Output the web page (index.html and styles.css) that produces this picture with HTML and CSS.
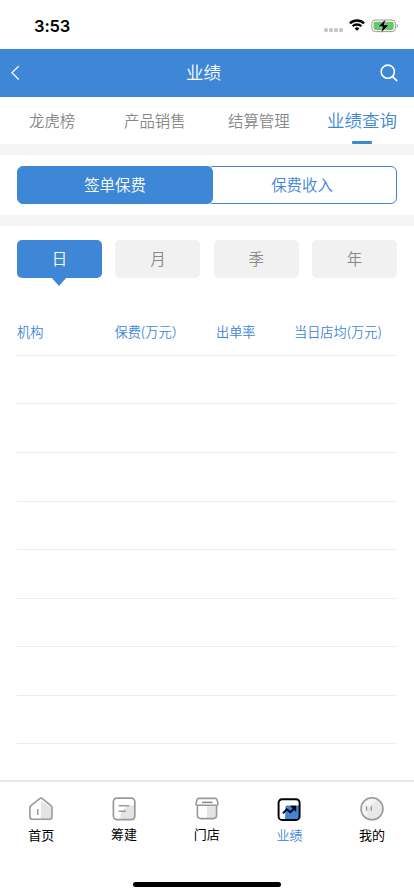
FILE: index.html
```html
<!DOCTYPE html>
<html lang="zh-CN">
<head>
<meta charset="utf-8">
<meta name="viewport" content="width=device-width, initial-scale=1">
<title>业绩</title>
<link rel="stylesheet" href="styles.css">
</head>
<body>
<div class="app">
  <div class="status">
    <span class="time">3:53</span>
    <div class="signals">
      <div class="dots"><i></i><i></i><i></i><i></i></div>
      <svg class="wifi" width="16" height="12" viewBox="0 0 16 12" fill="none" stroke="#000" stroke-width="2.3"><path d="M.9 4.4a10.1 10.1 0 0 1 14.2 0M3.6 7.3a6.3 6.3 0 0 1 8.800 0"/><path d="M8 11.800 5.600 9.400a3.500 3.500 0 0 1 4.800 0z" fill="#000" stroke="none"/></svg>
      <svg width="28" height="14" viewBox="0 0 28 14"><rect x=".8" y="1" width="23.600" height="11.600" rx="3.400" fill="#fff" stroke="#999"/><rect x="2.500" y="2.700" width="20.200" height="8.200" rx="1.800" fill="#63c966"/><path d="M25.700 5v4c1.500-.5 1.500-3.500 0-4z" fill="#999"/><path d="M14.800 0 6.800 7.800h4.700L9.800 13.900 18.200 5.800H13.300z" fill="#000" stroke="#fff" stroke-width=".5"/></svg>
    </div>
  </div>
  <header class="nav">
    <svg width="10" height="16" viewBox="0 0 10 16" fill="none" stroke="#fff" stroke-width="1.200"><path d="M8.700 1.200 1.900 7.800l6.800 6.700"/></svg>
    <h1>业绩</h1>
    <svg width="18" height="18" viewBox="0 0 18 18" fill="none" stroke="#fff" stroke-width="1.600" stroke-linecap="round"><circle cx="7.800" cy="7.700" r="6.600"/><path d="m12.600 12.600 4.100 4"/></svg>
  </header>
  <nav class="tabs">
    <span>龙虎榜</span><span>产品销售</span><span>结算管理</span><span class="current">业绩查询</span>
  </nav>
  <section class="segment">
    <button class="seg on">签单保费</button><button class="seg">保费收入</button>
  </section>
  <main>
    <div class="periods">
      <button class="on">日</button><button>月</button><button>季</button><button>年</button>
    </div>
    <div class="table">
      <div class="row head"><span>机构</span><span>保费(万元）</span><span>出单率</span><span>当日店均(万元)</span></div>
      <div class="row"></div><div class="row"></div><div class="row"></div><div class="row"></div>
      <div class="row"></div><div class="row"></div><div class="row"></div><div class="row"></div>
    </div>
  </main>
  <footer class="tabbar">
    <div class="item">
      <svg width="24" height="24" viewBox="0 0 24 24"><path d="M12 3.500 22.500 10v12H12c-1.500-7 2-10.500 8-12.500z" fill="#e4e4e4"/><path d="M12 4 20 10 12 22z" fill="#e4e4e4"/><path d="M10.700 1.600 1.900 8.600Q.9 9.400.9 10.700v9q0 2.600 2.600 2.600h16.900q2.600 0 2.600-2.600v-9q0-1.300-1-2.100l-8.700-7q-1.300-1-2.600 0z" fill="none" stroke="#999" stroke-width="1.600"/><path d="M8.700 12v6" stroke="#999" stroke-width="1.500"/></svg>
      <span>首页</span>
    </div>
    <div class="item raised">
      <svg width="24" height="24" viewBox="0 0 24 24"><path d="M22 8v14H8.500C7.500 14 13 8.500 22 8z" fill="#e4e4e4"/><rect x="1.400" y="1.200" width="21.400" height="21.400" rx="3.500" fill="none" stroke="#999" stroke-width="1.700"/><path d="M6.700 8.700h10.600M6.700 14.200h7.300" stroke="#999" stroke-width="1.600"/></svg>
      <span>筹建</span>
    </div>
    <div class="item raised">
      <svg width="24" height="24" viewBox="0 0 24 24"><path d="M12 8.500h9V18q0 3-3 3h-6z" fill="#e4e4e4"/><path d="M2.400 8.500v9.600q0 3.500 3.500 3.500h12.200q3.500 0 3.500-3.500V8.500" fill="none" stroke="#999" stroke-width="1.600"/><path d="M4 1.400h16q1.700 0 2.100 1.700l.8 3.200q.4 2-1.500 2H2.600q-1.900 0-1.500-2l.8-3.200Q2.300 1.400 4 1.400z" fill="#fff" stroke="#999" stroke-width="1.600"/><path d="M7 5.400h10.500" stroke="#888" stroke-width="1.500"/></svg>
      <span>门店</span>
    </div>
    <div class="item active">
      <svg width="24" height="24" viewBox="0 0 24 24"><path d="M8.500 8.500Q9 7.600 10 7.600h12V22H8z" fill="#3e86d6"/><rect x="1.600" y="1.200" width="21" height="20.800" rx="3.600" fill="none" stroke="#000" stroke-width="1.900"/><path d="m6 15.300 3.700-4 3.700 3 5-5.500" fill="none" stroke="#000" stroke-width="1.900"/><path d="M13 7.700h6.200v6.200z" fill="#000"/></svg>
      <span>业绩</span>
    </div>
    <div class="item">
      <svg width="24" height="24" viewBox="0 0 24 24"><circle cx="12" cy="11.800" r="11" fill="#e8e8e8"/><path d="M8 21C5 13 10 7 17 4 12-1 1 3 1.500 12c0 4 3 8 6.500 9z" fill="#f5f5f5"/><circle cx="12" cy="11.800" r="11" fill="none" stroke="#999" stroke-width="1.600"/><path d="M6.600 9.300v4.400M11.300 9.300v4.400" stroke="#999" stroke-width="1.400"/></svg>
      <span>我的</span>
    </div>
    <div class="home"></div>
  </footer>
</div>
</body>
</html>
```
FILE: styles.css
```css
* { box-sizing: border-box; }
body { margin: 0; background: #fff; font-family: "Noto Sans CJK SC", sans-serif; font-weight: 350; color: #000; }
button { border: 0; padding: 0; font: inherit; }
.app { width: 414px; height: 896px; display: flex; flex-direction: column; overflow: hidden; }
.status { height: 49px; flex: none; display: flex; justify-content: space-between; padding: 0 15px 0 34px; }
.time { font: 600 16.500px/52px Inter, sans-serif; letter-spacing: -.1px; }
.signals { display: flex; align-items: flex-start; padding-top: 19px; }
.dots { display: flex; gap: 1px; margin: 9px 6px 0 0; }
.dots i { width: 4px; height: 4px; border-radius: 1.500px; background: #c6c6c6; }
.wifi { margin-right: 6px; }
.nav { height: 48px; flex: none; background: #3e86d6; color: #fff; display: flex; align-items: center; justify-content: space-between; padding: 0 16px 0 10px; }
.nav h1 { margin: 0 0 0 7px; font-size: 17.500px; line-height: 44px; height: 46px; font-weight: 350; }
.tabs { height: 47px; flex: none; display: grid; grid-template-columns: 95px 104px 99px 1fr; white-space: nowrap; padding: 0 17px 0 29px; font-size: 15.400px; line-height: 46px; color: #888; }
.tabs .current { position: relative; font-size: 17.500px; line-height: 45px; color: #3e86d6; }
.current::after { content: ""; position: absolute; left: 25px; top: 44px; width: 20px; height: 2.500px; border-radius: 1px; background: #3e86d6; }
.segment { height: 82px; flex: none; border: solid #f5f5f5; border-width: 11px 0; padding: 11px 17px; display: flex; }
.seg { height: 38px; width: 190px; margin-left: -6px; font-size: 15.400px; line-height: 33px; padding-bottom: 2px; color: #3e86d6; background: #fff; border: 1px solid #3e86d6; border-radius: 6px; }
.seg.on { position: relative; z-index: 1; width: 196px; margin: 0; color: #fff; background: #3e86d6; }
main { flex: 1; padding: 14px 17px 0; }
.periods { display: grid; grid-template-columns: repeat(4, 85px); justify-content: space-between; }
.periods button { position: relative; height: 38px; border-radius: 5px; background: #f1f1f1; color: #888; font-size: 15.400px; line-height: 34px; padding-bottom: 2px; }
.periods .on { background: #3e86d6; color: #fff; }
.periods .on::after { content: ""; position: absolute; left: 34px; top: 37px; border: solid transparent; border-width: 9px 8.500px 0; border-top-color: #3e86d6; }
.table { margin-top: 29.400px; }
.row { height: 48.550px; border-bottom: 1px solid #ececec; }
.head { display: grid; grid-template-columns: 97.500px 101.500px 78px 1fr; font-size: 13.200px; line-height: 49px; color: #3e86d6; white-space: nowrap; }
.tabbar { position: relative; height: 116px; flex: none; border-top: 2px solid #e8e8e8; padding-top: 15px; display: grid; grid-template-columns: repeat(5, 82.700px); align-items: start; }
.item { display: flex; flex-direction: column; align-items: center; font-size: 13px; line-height: 20px; font-weight: 400; }
.item svg { margin-bottom: 4px; }
.raised svg { margin-bottom: 3px; }
.active { color: #3e86d6; font-weight: 350; }
.active svg { margin: 1px 0 3px; }
.home { position: absolute; left: 133px; bottom: 9px; width: 148px; height: 5px; border-radius: 3px; background: #000; }
```
